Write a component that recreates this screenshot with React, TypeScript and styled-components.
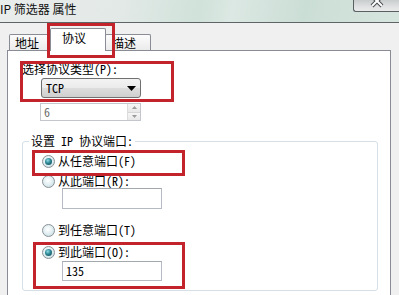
import React from "react";
import styled, { createGlobalStyle } from "styled-components";

const Global = createGlobalStyle`
  html, body { margin: 0; padding: 0; background: #f0f0f0; }
  #root { width: 399px; height: 295px; }
`;

const BODY_FONT = `"Noto Sans Mono CJK SC", "Liberation Mono", "Noto Sans CJK SC", monospace`;

const Window = styled.div`
  width: 399px;
  height: 295px;
  overflow: hidden;
  display: flex;
  flex-direction: column;
  background: #f0f0f0;
  font-family: ${BODY_FONT};
  font-size: 12px;
  line-height: 14px;
  color: #000;
`;

const TitleBar = styled.div`
  flex: none;
  height: 22px;
  display: flex;
  align-items: flex-start;
  border-bottom: 1px solid #5e6567;
  background: linear-gradient(
    100deg,
    #e9edec 0%,
    #e3e9e7 30%,
    #d0e2da 50%,
    #dce8e3 58%,
    #cbded6 76%,
    #d7e5df 100%
  );
`;

const TitleText = styled.div`
  padding-top: 2px;
  font-family: "Noto Sans CJK SC", sans-serif;
  font-size: 12px;
  line-height: 14px;
  color: #111;
  white-space: nowrap;
`;

const CloseButton = styled.div`
  margin-left: auto;
  width: 45px;
  height: 11px;
  border-left: 1px solid #5b5f62;
  border-bottom: 1px solid #5b5f62;
  border-bottom-left-radius: 3px;
  background: linear-gradient(#c9cccd, #dfe1e2 60%, #e9ebeb);
  display: flex;
  justify-content: center;
  align-items: flex-end;
  overflow: hidden;
`;

const Body = styled.div`
  flex: 1;
  display: flex;
  flex-direction: column;
  padding: 5px 8px 0 7px;
  min-height: 0;
`;

const TabStrip = styled.div`
  flex: none;
  display: flex;
  align-items: flex-start;
  height: 23px;
  padding-left: 2px;
  margin-bottom: -1px;
  position: relative;
  z-index: 2;
`;

const Tab = styled.div<{ $active?: boolean; $pl: number; $pr: number }>`
  position: relative;
  box-sizing: border-box;
  border: 1px solid #898c95;
  border-bottom: none;
  border-radius: 2px 2px 0 0;
  white-space: nowrap;
  padding: ${(p) => (p.$active ? "2px" : "1px")} ${(p) => p.$pr}px 0
    ${(p) => p.$pl}px;
  margin-top: ${(p) => (p.$active ? 0 : 6)}px;
  height: ${(p) => (p.$active ? 23 : 16)}px;
  margin-left: ${(p) => (p.$active ? -2 : 0)}px;
  margin-right: ${(p) => (p.$active ? -1 : 0)}px;
  z-index: ${(p) => (p.$active ? 2 : 1)};
  background: ${(p) =>
    p.$active ? "#ffffff" : "linear-gradient(#fcfcfc, #ebebeb)"};
`;

const Panel = styled.div`
  flex: 1;
  display: flex;
  flex-direction: column;
  align-items: flex-start;
  background: #ffffff;
  border: 1px solid #898c95;
  border-bottom: none;
  padding: 11px 12px 0 14px;
  position: relative;
  z-index: 1;
`;

const Mark = styled.span<{
  $l: number;
  $t: number;
  $r?: number;
  $b?: number;
  $w?: number;
  $h?: number;
}>`
  position: absolute;
  left: ${(p) => p.$l}px;
  top: ${(p) => p.$t}px;
  ${(p) => (p.$r !== undefined ? `right: ${p.$r}px;` : "")}
  ${(p) => (p.$b !== undefined ? `bottom: ${p.$b}px;` : "")}
  ${(p) => (p.$w !== undefined ? `width: ${p.$w}px;` : "")}
  ${(p) => (p.$h !== undefined ? `height: ${p.$h}px;` : "")}
  box-sizing: border-box;
  border: 3px solid #c3242c;
  pointer-events: none;
  z-index: 5;
`;

const TypeSection = styled.div`
  position: relative;
  display: flex;
  flex-direction: column;
  align-items: flex-start;
`;

const Label = styled.div`
  white-space: nowrap;
  line-height: 14px;
`;

const Combo = styled.div`
  box-sizing: border-box;
  width: 100px;
  height: 20px;
  margin: 2px 0 0 19px;
  border: 1px solid #707070;
  border-radius: 3px;
  display: flex;
  align-items: center;
  justify-content: space-between;
  padding: 0 4px 0 4px;
  background: linear-gradient(#f3f3f3 0%, #ebebeb 48%, #dddddd 52%, #cfcfcf 100%);
`;

const Spinner = styled.div`
  box-sizing: border-box;
  width: 101px;
  height: 18px;
  margin: 5px 0 0 18px;
  border: 1px solid #c3c6cc;
  display: flex;
  background: #fff;
  color: #6d6d6d;
`;

const SpinValue = styled.div`
  flex: 1;
  padding-left: 3px;
  line-height: 16px;
`;

const SpinButtons = styled.div`
  width: 12px;
  display: flex;
  flex-direction: column;
  border-left: 1px solid #dcdcdc;
`;

const SpinHalf = styled.div`
  flex: 1;
  display: flex;
  align-items: center;
  justify-content: center;
  background: linear-gradient(#f6f6f6, #e8e8e8);
  & + & {
    border-top: 1px solid #d6d6d6;
  }
`;

const GroupBox = styled.fieldset`
  align-self: stretch;
  margin: 13px 0 0 0;
  padding: 0 0 9px 6px;
  border: 1px solid #d5dfe5;
  border-radius: 3px;
  min-width: 0;
`;

const Legend = styled.legend`
  padding: 0 2px;
  line-height: 14px;
  white-space: nowrap;
`;

const RadioRow = styled.div<{ $mt: number }>`
  position: relative;
  display: flex;
  align-items: center;
  gap: 3px;
  height: 16px;
  padding-left: 13px;
  margin-top: ${(p) => p.$mt}px;
  white-space: nowrap;
`;

const Radio = styled.span<{ $checked?: boolean }>`
  flex: none;
  box-sizing: border-box;
  width: 13px;
  height: 13px;
  border-radius: 50%;
  border: 1px solid #8a9096;
  background: radial-gradient(
    circle at 45% 40%,
    #ffffff 0%,
    #e4f0f3 45%,
    #bcd8df 100%
  );
  display: flex;
  align-items: center;
  justify-content: center;
  &::after {
    content: "";
    display: ${(p) => (p.$checked ? "block" : "none")};
    width: 7px;
    height: 7px;
    border-radius: 50%;
    background: radial-gradient(
      circle at 40% 35%,
      #8fdde6 0%,
      #2c8593 45%,
      #0f3f49 100%
    );
  }
`;

const PortGroup = styled.div`
  position: relative;
  margin-top: 6px;
`;

const TextBox = styled.div<{ $mt: number; $h: number }>`
  box-sizing: border-box;
  width: 100px;
  height: ${(p) => p.$h}px;
  margin: ${(p) => p.$mt}px 0 0 33px;
  border: 1px solid #b5bac2;
  border-top-color: #a3a7ae;
  background: #fff;
  padding-left: 3px;
  line-height: ${(p) => p.$h - 2}px;
`;

export default function App() {
  return (
    <>
      <Global />
      <Window>
        <TitleBar>
          <TitleText>IP 筛选器 属性</TitleText>
          <CloseButton>
            <svg width="16" height="12" viewBox="0 0 16 12" style={{ marginBottom: 3 }}>
              <path d="M3 0 L13 10 M13 0 L3 10" stroke="#4a4f52" strokeWidth="4" />
              <path d="M3 0 L13 10 M13 0 L3 10" stroke="#ffffff" strokeWidth="2" />
            </svg>
          </CloseButton>
        </TitleBar>
        <Body>
          <TabStrip>
            <Tab $pl={5} $pr={12}>地址</Tab>
            <Tab $active $pl={11} $pr={19}>
              协议
              <Mark $l={-4} $t={-6} $r={-10} $b={-7} />
            </Tab>
            <Tab $pl={6} $pr={14}>描述</Tab>
          </TabStrip>
          <Panel>
            <TypeSection>
              <Label>选择协议类型(P):</Label>
              <Combo>
                <span>TCP</span>
                <svg width="9" height="5" viewBox="0 0 9 5">
                  <path d="M0 0 H9 L4.5 5 Z" fill="#000" />
                </svg>
              </Combo>
              <Mark $l={-2} $t={-1} $r={-33} $b={-4} />
            </TypeSection>
            <Spinner>
              <SpinValue>6</SpinValue>
              <SpinButtons>
                <SpinHalf>
                  <svg width="5" height="3" viewBox="0 0 5 3">
                    <path d="M0 3 H5 L2.5 0 Z" fill="#9a9a9a" />
                  </svg>
                </SpinHalf>
                <SpinHalf>
                  <svg width="5" height="3" viewBox="0 0 5 3">
                    <path d="M0 0 H5 L2.5 3 Z" fill="#9a9a9a" />
                  </svg>
                </SpinHalf>
              </SpinButtons>
            </Spinner>
            <GroupBox>
              <Legend>设置 IP 协议端口:</Legend>
              <RadioRow $mt={5}>
                <Radio $checked />
                <span>从任意端口(F)</span>
                <Mark $l={3} $t={-3} $w={153} $h={26} />
              </RadioRow>
              <RadioRow $mt={4}>
                <Radio />
                <span>从此端口(R):</span>
              </RadioRow>
              <TextBox $mt={-1} $h={21} />
              <RadioRow $mt={13}>
                <Radio />
                <span>到任意端口(T)</span>
              </RadioRow>
              <PortGroup>
                <RadioRow $mt={0}>
                  <Radio $checked />
                  <span>到此端口(O):</span>
                </RadioRow>
                <TextBox $mt={1} $h={20}>135</TextBox>
                <Mark $l={4} $t={-2} $w={152} $b={-8} />
              </PortGroup>
            </GroupBox>
          </Panel>
        </Body>
      </Window>
    </>
  );
}
